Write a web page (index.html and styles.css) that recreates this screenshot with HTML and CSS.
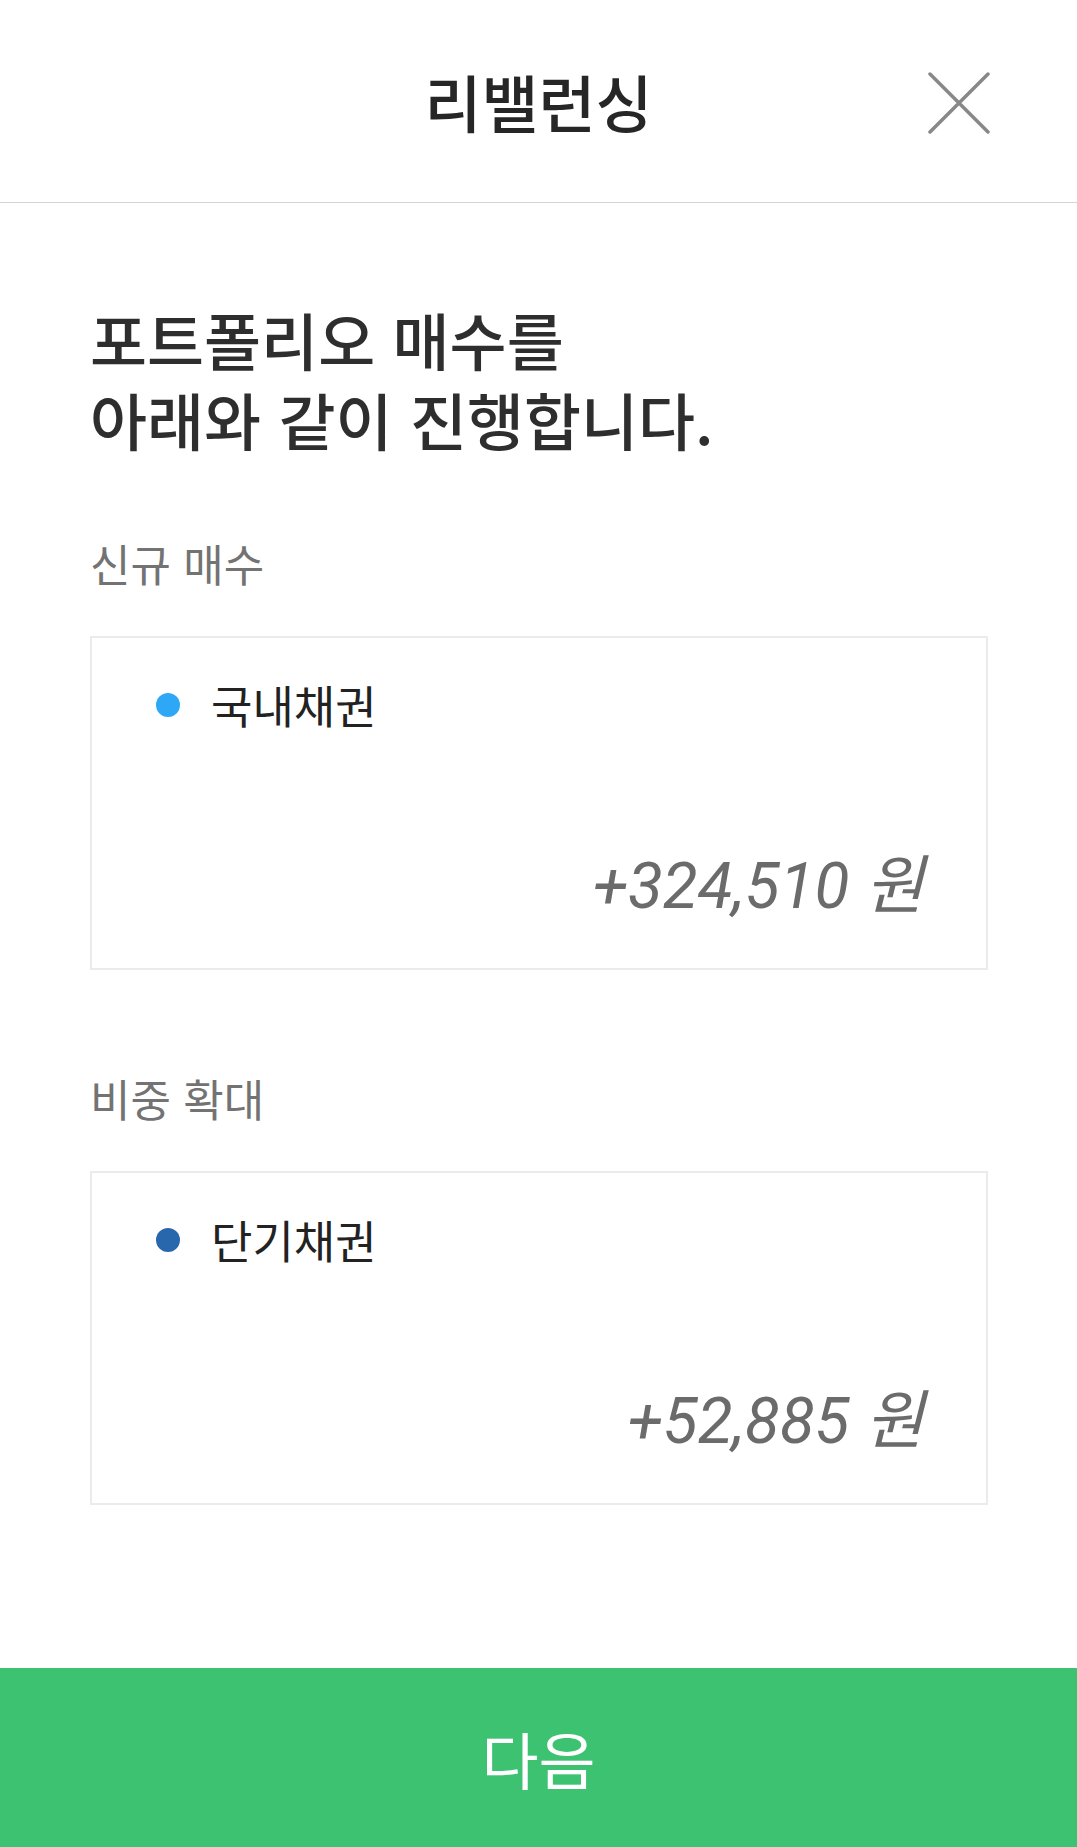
FILE: index.html
```html
<!DOCTYPE html>
<html lang="ko">
<head>
    <meta charset="UTF-8">
    <meta name="viewport" content="width=device-width, initial-scale=1.0">
    <title>리밸런싱</title>
    <link rel="stylesheet" href="styles.css">
</head>
<body>

<div class="page">
    <div class="header">
        <div class="header-title">리밸런싱</div>
        <div class="close-btn">
            <svg width="62" height="62" viewBox="0 0 62 62">
                <path d="M2 2 L60 60 M60 2 L2 60" stroke="#888" stroke-width="3.5" stroke-linecap="round" fill="none"/>
            </svg>
        </div>
    </div>

    <div class="content">
        <div class="headline">포트폴리오 매수를<br>아래와 같이 진행합니다.</div>

        <div class="section-label">신규 매수</div>
        <div class="asset-card">
            <div class="asset-name"><span class="dot dot-domestic"></span>국내채권</div>
            <div class="asset-amount">+324,510 <span class="won">원</span></div>
        </div>

        <div class="section-label">비중 확대</div>
        <div class="asset-card">
            <div class="asset-name"><span class="dot dot-short"></span>단기채권</div>
            <div class="asset-amount">+52,885 <span class="won">원</span></div>
        </div>
    </div>

    <div class="next-btn">다음</div>
</div>

</body>
</html>
```

FILE: styles.css
```css
body {
    margin: 0;
    padding: 0;
    background-color: #fff;
    font-family: "Noto Sans CJK KR", "Noto Sans", sans-serif;
    color: #222;
}
.page {
    display: flex;
    flex-direction: column;
    min-height: 100vh;
}
.header {
    position: relative;
    height: 202px;
    border-bottom: 1px solid #d4d4d4;
    display: flex;
    justify-content: center;
    align-items: center;
}
.header-title {
    font-size: 62px;
    font-weight: 500;
    color: #262626;
}
.close-btn {
    position: absolute;
    right: 87px;
    top: 72px;
    width: 62px;
    height: 62px;
}
.content {
    padding: 96px 89px 0 90px;
}
.headline {
    font-size: 62px;
    font-weight: 500;
    line-height: 80px;
    color: #2e2e2e;
}
.section-label {
    margin-top: 72px;
    font-size: 44px;
    color: #737373;
}
.asset-card {
    margin-top: 41px;
    border: 2px solid #ebebeb;
    box-sizing: border-box;
    height: 334px;
    padding: 34px 62px 0 64px;
    display: flex;
    flex-direction: column;
}
.asset-card + .section-label {
    margin-top: 96px;
}
.asset-name {
    display: flex;
    align-items: center;
    font-size: 45px;
    color: #222;
}
.dot {
    width: 24px;
    height: 24px;
    border-radius: 50%;
    margin-right: 31px;
}
.dot-domestic { background-color: #2ea8f6; }
.dot-short { background-color: #2967ac; }
.asset-amount {
    margin-top: auto;
    margin-bottom: 42px;
    text-align: right;
    font-family: Roboto, "Noto Sans CJK KR", sans-serif;
    font-style: italic;
    font-size: 64px;
    color: #6b6b6b;
}
.asset-amount .won {
    font-family: "Noto Sans CJK KR", sans-serif;
}
.next-btn {
    margin-top: auto;
    height: 179px;
    background-color: #3cc271;
    color: #fff;
    font-size: 62px;
    display: flex;
    justify-content: center;
    align-items: center;
}
```
